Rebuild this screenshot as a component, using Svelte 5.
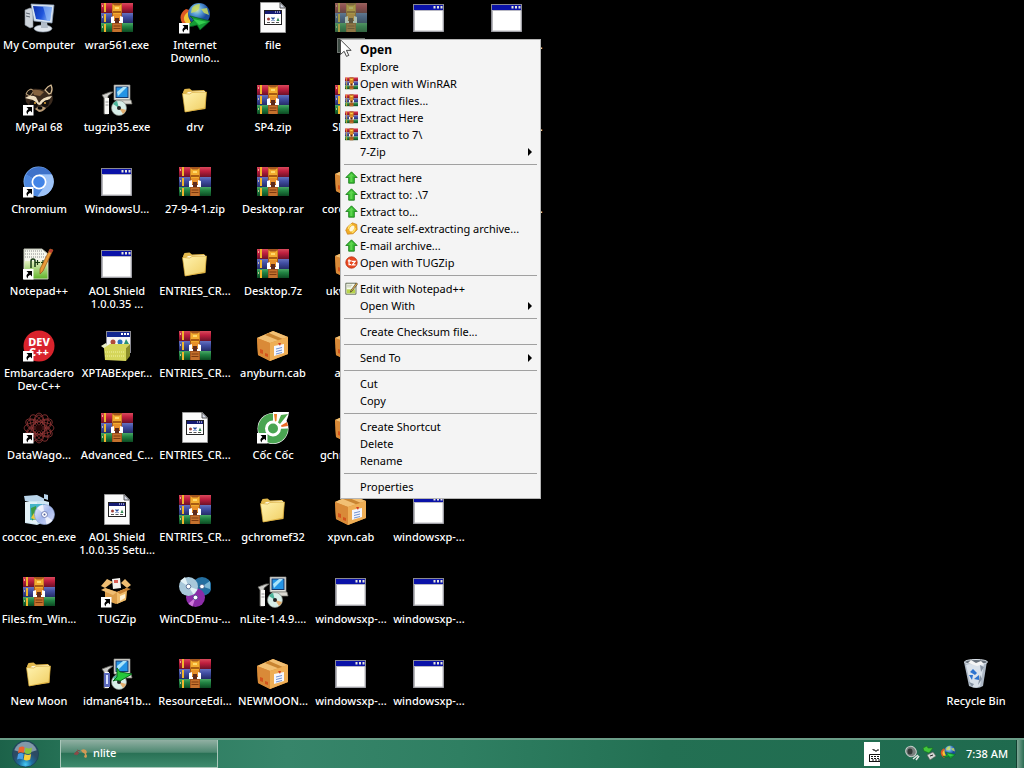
<script>
  const columns = [
    [
      { icon: 'computer', label: ['My Computer'] },
      { icon: 'raccoon', label: ['MyPal 68'], link: true },
      { icon: 'chromium', label: ['Chromium'], link: true },
      { icon: 'notepad', label: ['Notepad++'], link: true },
      { icon: 'devcpp', label: ['Embarcadero', 'Dev-C++'], link: true },
      { icon: 'wagon', label: ['DataWago...'], link: true },
      { icon: 'setupbox', label: ['coccoc_en.exe'] },
      { icon: 'rar', label: ['Files.fm_Win...'] },
      { icon: 'folder', label: ['New Moon'] }
    ],
    [
      { icon: 'rar', label: ['wrar561.exe'] },
      { icon: 'installer', label: ['tugzip35.exe'] },
      { icon: 'window', label: ['WindowsU...'] },
      { icon: 'window', label: ['AOL Shield', '1.0.0.35 ...'] },
      { icon: 'package', label: ['XPTABExper...'] },
      { icon: 'rar', label: ['Advanced_C...'] },
      { icon: 'page', label: ['AOL Shield', '1.0.0.35 Setu...'] },
      { icon: 'openbox', label: ['TUGZip'], link: true },
      { icon: 'idman', label: ['idman641b...'] }
    ],
    [
      { icon: 'globe', label: ['Internet', 'Downlo...'], link: true },
      { icon: 'folder', label: ['drv'] },
      { icon: 'rar', label: ['27-9-4-1.zip'] },
      { icon: 'folder', label: ['ENTRIES_CR...'] },
      { icon: 'rar', label: ['ENTRIES_CR...'] },
      { icon: 'page', label: ['ENTRIES_CR...'] },
      { icon: 'rar', label: ['ENTRIES_CR...'] },
      { icon: 'discs', label: ['WinCDEmu-...'] },
      { icon: 'rar', label: ['ResourceEdi...'] }
    ],
    [
      { icon: 'page', label: ['file'] },
      { icon: 'rar', label: ['SP4.zip'] },
      { icon: 'rar', label: ['Desktop.rar'] },
      { icon: 'rar', label: ['Desktop.7z'] },
      { icon: 'box', label: ['anyburn.cab'] },
      { icon: 'coccoc', label: ['Cốc Cốc'], link: true },
      { icon: 'folder', label: ['gchromef32'] },
      { icon: 'installer', label: ['nLite-1.4.9....'] },
      { icon: 'box', label: ['NEWMOON...'] }
    ],
    [
      { icon: 'rar', label: [], selected: true },
      { icon: 'rar', label: ['SP4.rar'] },
      { icon: 'box', label: ['corona.cab'] },
      { icon: 'box', label: ['ukwn.cab'] },
      { icon: 'box', label: ['as.cab'] },
      { icon: 'box', label: ['gchrom.cab'] },
      { icon: 'box', label: ['xpvn.cab'] },
      { icon: 'window', label: ['windowsxp-...'] },
      { icon: 'window', label: ['windowsxp-...'] }
    ],
    Array.from({ length: 9 }, (_, row) => ({ icon: 'window', label: row < 6 ? [] : ['windowsxp-...'] })),
    Array.from({ length: 3 }, () => ({ icon: 'window', label: ['windowsxp-...'] }))
  ];

  const menu = [
    [
      { text: 'Open', bold: true },
      { text: 'Explore' },
      { text: 'Open with WinRAR', icon: 'rar' },
      { text: 'Extract files...', icon: 'rar' },
      { text: 'Extract Here', icon: 'rar' },
      { text: 'Extract to 7\\', icon: 'rar' },
      { text: '7-Zip', sub: true }
    ],
    [
      { text: 'Extract here', icon: 'up' },
      { text: 'Extract to: .\\7', icon: 'up' },
      { text: 'Extract to...', icon: 'up' },
      { text: 'Create self-extracting archive...', icon: 'sfx' },
      { text: 'E-mail archive...', icon: 'up' },
      { text: 'Open with TUGZip', icon: 'tz' }
    ],
    [{ text: 'Edit with Notepad++', icon: 'edit' }, { text: 'Open With', sub: true }],
    [{ text: 'Create Checksum file...' }],
    [{ text: 'Send To', sub: true }],
    [{ text: 'Cut' }, { text: 'Copy' }],
    [{ text: 'Create Shortcut' }, { text: 'Delete' }, { text: 'Rename' }],
    [{ text: 'Properties' }]
  ];
</script>

{#snippet art(name)}
  {#if name === 'rar'}
    <rect x="0" y="1" width="32" height="10" fill="url(#g-red)" />
    <rect x="0" y="11" width="32" height="10" fill="url(#g-blue)" />
    <rect x="0" y="21" width="32" height="9" fill="url(#g-green)" />
    <path d="M4 1v9M4 12v8M4 22v8" stroke="#f0b62c" stroke-width="2" />
    <path d="M1 4h1M1 15h1M1 25h1" stroke="#f5d9a0" stroke-width="1.5" />
    <rect x="11" y="1" width="10" height="29" fill="#a5561f" />
    <path d="M12 22h8v8h-8z" fill="#c4712d" />
    <path d="M12.500 24h7M12.500 26.500h7" stroke="#7c3a10" />
    <path d="M11.500 2l2 1.500h5L20.500 2v7l-1 5h-7l-1-5z" fill="#f3ac2e" />
    <path d="M12 9h8v2h-8z" fill="#a85c12" />
    <path d="M14 5h4v2h-4z" fill="#ffd96a" />
    <path d="M10 15l3-1v5h6v-5l3 1v6H10z" fill="#fff" />
    <path d="M13 12h6v6h-6z" fill="#e8902a" />
    <path d="M14 16h4v5h-4z" fill="#5d2a1c" />
  {:else if name === 'window'}
    <rect x="0.500" y="2.500" width="30" height="27" fill="#fff" stroke="#8b8b93" />
    <rect x="1" y="3" width="29" height="5" fill="#0a12a8" />
    <path d="M1 8.500h29" stroke="#b8b8c4" />
    <path d="M1.500 9v20h28.500V9" fill="none" stroke="#b6b6ba" />
    <path d="M20.500 4h2v2.500h-2zM24 4h2v2.500h-2zM27.500 4h2v2.500h-2z" fill="#e8e8dc" />
  {:else if name === 'folder'}
    <path d="M4 8l1.500-3 5-.5 2.500 2 12-.5 1.500 2v17l-20 3z" fill="#e3b94c" />
    <path d="M9 8l17-1v3H7z" fill="#fff7d8" />
    <path d="M3.500 9.500l7 .5 2.500-1.500 14.500-.5-1.500 16L6 28z" fill="url(#g-folder)" stroke="#d9aa3a" stroke-width=".7" />
  {:else if name === 'page'}
    <path d="M3.500.5h20l5 5v25h-25z" fill="#fafafa" stroke="#9a9a9a" />
    <path d="M23 .5v5.500h5.500z" fill="#d7dbe8" stroke="#333" stroke-width=".8" />
    <rect x="7.500" y="8.500" width="17" height="14" fill="#fff" stroke="#222" />
    <rect x="8" y="9" width="16" height="3" fill="#151b72" />
    <path d="M18 10h1M20 10h1M22 10h1" stroke="#fff" />
    <circle cx="11.500" cy="17" r="1.500" fill="#a0403a" />
    <path d="M14.500 15.500l3 3m0-3l-3 3" stroke="#264c9e" stroke-width="1.300" />
    <path d="M19.500 19l1.500-3.500L22.500 19z" fill="#2f8750" />
    <path d="M10 20.500h3M14.500 20.500h3M19 20.500h3" stroke="#555" />
  {:else if name === 'box'}
    <path d="M0 8L16 1l15 6v17l-18 7L1 25z" fill="#d98f35" />
    <path d="M0 8L16 1l15 6-18 6z" fill="#f2c074" />
    <path d="M8 5l15 6v4l3-1V9L12 3z" fill="#c98532" />
    <path d="M13 13L31 7v17l-18 7z" fill="#eeae55" />
    <path d="M0 8l13 5v18L1 25z" fill="#d98a38" />
    <path d="M17 16l10-2v9l-10 3z" fill="#f4f7ff" />
    <path d="M19 19l6-1.500M19 21.500l6-1.500M19 24l6-1.500" stroke="#7292d0" stroke-width="1" />
    <path d="M21 13l2 3 1-3z" fill="#d33b22" />
    <path d="M3 19l3 1v4l-3-1zM8 23l3 1v3l-3-1z" fill="#d4541d" />
  {:else if name === 'computer'}
    <path d="M2 8l5-2 3 1v18l-3 1-5-3z" fill="#cdd3da" stroke="#8a929c" stroke-width=".6" />
    <path d="M3 11l4 1M3 14l4 1" stroke="#5b6470" />
    <ellipse cx="20" cy="26.500" rx="9" ry="3.500" fill="#dfe5ec" stroke="#8b98a8" stroke-width=".6" />
    <path d="M18 20h6l1 6h-7z" fill="#b2bcc8" />
    <path d="M8 2l23 1-2 18-18-2z" fill="#d9e4f0" stroke="#8ea0b8" stroke-width=".7" />
    <path d="M10 4l19 1-2 14-14-2z" fill="url(#g-screen)" />
    <path d="M20 4.500l9 .5-2 14-3-.5z" fill="#8db6f5" opacity=".7" />
  {:else if name === 'raccoon'}
    <path d="M2 12q1-6 6-7 7-1 13 1 3-4 7-5 3 3 1 9 2 6-1 10-5 6-12 6-8-1-13-8z" fill="#3a2a1e" />
    <path d="M22 6q3-4 6-5 2 4 0 8l-2 1z" fill="#1a1310" stroke="#d6bd95" stroke-width="1.200" />
    <path d="M3 10q1-4 5-5l3 2-4 5z" fill="#17110d" stroke="#c7ac82" />
    <path d="M9 6q7-1 12 2l-4 4-6-1z" fill="#84623f" />
    <path d="M2 14q6-4 11-1l3 6q3-6 13-7-2 4-7 5l-5 4-4-1-3-4q-4-1-8-2z" fill="#efdfc2" />
    <path d="M7 17q5-2 8 4l-3 4-6-3zM19 19q4-4 8-3l-2 6-6 2z" fill="#15100e" />
    <path d="M12 25q5-5 11-1-3 4-7 4z" fill="#b99b76" />
    <circle cx="12" cy="19" r="1" fill="#e2a33b" /><circle cx="22" cy="19" r="1" fill="#e2a33b" />
    <ellipse cx="17" cy="24" rx="2.500" ry="1.700" fill="#050505" />
  {:else if name === 'chromium'}
    <circle cx="15.500" cy="15.500" r="15" fill="#7db0f3" />
    <path d="M16 16L3 8.500A15 15 0 0 1 29 8.500H16z" fill="#3f72c9" />
    <path d="M3 8.500A15 15 0 0 0 14.500 30.500L22 19.500 16 16z" fill="#4d88e0" />
    <path d="M29 8.500H16l6.500 11L14.500 30.500A15 15 0 0 0 29 8.500z" fill="#9dc3f8" />
    <circle cx="16" cy="16" r="7.500" fill="#fff" />
    <circle cx="16" cy="16" r="5.800" fill="#4284e6" />
  {:else if name === 'notepad'}
    <path d="M1 1h18l6 5v25H1z" fill="#f5f7ee" stroke="#b8bcae" />
    <path d="M1.500 13h23v17.500h-23z" fill="url(#g-np)" />
    <path d="M2 3h17M2 6h19M2 9h22" stroke="#8a8a8a" stroke-dasharray="1 1" />
    <path d="M8 20v-7q0-2 2-2t2 2v6" fill="none" stroke="#173a12" stroke-width="1.500" />
    <path d="M12 14.500h5M14.500 12v5M18 14.500h4M20 12v5" stroke="#173a12" stroke-width="1.200" />
    <path d="M27 1l3 1-10 21-3 3 0-5z" fill="#e79a38" stroke="#955415" stroke-width=".7" />
    <path d="M27 1l3 1-1.500 3-3-1z" fill="#b93e32" />
  {:else if name === 'devcpp'}
    <circle cx="16" cy="16" r="15.500" fill="#d9232c" />
    <text x="16" y="15.500" class="dev">DEV</text>
    <text x="16" y="26" class="dev">C++</text>
  {:else if name === 'wagon'}
    <g fill="none" stroke="#8e3434" stroke-width=".8">
      {#each [0, 30, 60, 90, 120, 150] as angle}
        <ellipse cx="16" cy="16" rx="15" ry="6" transform="rotate({angle} 16 16)" />
        <ellipse cx="16" cy="9" rx="4" ry="6" transform="rotate({angle * 2} 16 16)" />
      {/each}
    </g>
    <circle cx="16" cy="16" r="3" fill="#240505" />
  {:else if name === 'setupbox'}
    <path d="M2 8l13-3 11 3v18l-12 5-12-2z" fill="#cfe6f2" />
    <path d="M1 2l13-1 8 4 3 1V1l-4-1v7H2z" fill="#b9d4ea" />
    <path d="M2 8h12v22L2 28z" fill="#e4f2f8" />
    <path d="M7 10h15v16H7z" fill="#46b5c9" />
    <path d="M8 14l5-2 1 8-5 7z" fill="#3f9b43" /><path d="M8 24l3-5 2 7z" fill="#ecc93e" />
    <circle cx="21.500" cy="20.500" r="10" fill="url(#g-disc)" stroke="#8ba2d4" stroke-width=".7" />
    <path d="M21.500 20.500L14 14a10 10 0 0 1 6-3.500zM21.500 20.500l8 6a10 10 0 0 1-6 4z" fill="#fff" opacity=".7" />
    <circle cx="21.500" cy="20.500" r="3" fill="#fff" stroke="#7280b8" /><circle cx="21.500" cy="20.500" r="1" fill="#4e5c99" />
  {:else if name === 'installer' || name === 'idman'}
    <path d="M13 1h16v15H13z" fill="#e3e3dc" stroke="#8b8b86" stroke-width=".7" />
    <rect x="15" y="3" width="12" height="10.500" fill="#2494e5" stroke="#14376b" />
    <path d="M16 8l6-5h4l-9 9z" fill="#a9e4fa" />
    <path d="M15 16h15l1 4H16z" fill="#dad9d2" stroke="#77756f" stroke-width=".7" />
    <path d="M1 11l8-3h3l-5 4v18H3V14z" fill="#cfcfcb" stroke="#676762" stroke-width=".8" />
    <path d="M4 14h4v16H4z" fill="#f8f8f5" /><path d="M4.500 18h3M4.500 21h3" stroke="#999" />
    <circle cx="18" cy="24" r="7.500" fill="#d8eee8" stroke="#878b84" stroke-width=".7" />
    <path d="M18 24l-6-4a7 7 0 0 1 4-3z" fill="#4cb59b" /><path d="M18 24l4 6a7 7 0 0 0 3-4z" fill="#e1ad6e" />
    <circle cx="18" cy="24" r="2" fill="#222" />
    {#if name === 'idman'}
      <path d="M3 15h6v14H3z" fill="#5b69bc" /><path d="M5 17h2v9H5z" fill="#d9e3ff" />
      <path d="M16 10l3 4 12 2-12 7-4-1-3 1 4-4z" fill="#26c73b" stroke="#0b691c" />
    {/if}
  {:else if name === 'package'}
    <rect x="5.500" y="1.500" width="24" height="21" fill="#f5f5f5" stroke="#8b8b93" />
    <path d="M6 2h23v5H6z" fill="#11268f" /><path d="M20 4h2M23 4h2M26 4h2" stroke="#fff" stroke-width="2" />
    <circle cx="12" cy="12" r="2.500" fill="#b04b39" /><circle cx="19" cy="12" r="2.500" fill="#2771bc" /><path d="M25 9l3 5h-5z" fill="#2b9273" />
    <path d="M0 16l5-3 3 5-4 1z" fill="#e9efc7" />
    <path d="M3 18l6-4 20 0-4 4zM3 18h22v13L4 30z" fill="#d5d65a" />
    <path d="M25 18l4-4v12l-4 5z" fill="#8d8e29" />
    <path d="M4 22h20M4 26h20" stroke="#f2f3a2" stroke-dasharray="1 1" />
  {:else if name === 'openbox'}
    <path d="M4 12l12 4 10-4-1 12-10 4-11-4z" fill="#dc9e4a" />
    <path d="M16 16l10-4-1 12-9 4z" fill="#f0bd6c" />
    <path d="M4 12L0 10l6-7 6 3zM26 12l4-3-6-6-4 4zM4 12l-4 2 12 5 4-3z" fill="#efbd72" />
    <path d="M26 12l4 1-11 5-3-2z" fill="#c98335" />
    <path d="M11 3l8-1 1 10-8 1z" fill="#f4f2ef" /><path d="M13 4h4v3h-4z" fill="#db5e55" />
    <path d="M19 20l5-2v4l-5 3z" fill="#fff2d4" />
  {:else if name === 'globe'}
    <path d="M8 26C0 20-1 12 7 7l7 2c-8 5-8 9-2 13z" fill="#de5723" />
    <path d="M8 22C3 18 4 12 11 9l5 2c-6 4-7 8-1 12z" fill="#f2c638" />
    <circle cx="20" cy="12" r="11" fill="url(#g-globe)" />
    <path d="M13 6q3-4 8-4l-1 5-4 3-4 1zM22 7l6-1 2 7-5-2z" fill="#c9d95d" opacity=".85" />
    <path d="M11 14l20 5-10 9-3-5q-7 3-12 0 6-1 9-5z" fill="#159b34" stroke="#06591c" stroke-width=".7" />
    <path d="M14 17l14 3-8 3z" fill="#35cf4f" />
  {:else if name === 'discs'}
    <circle cx="23" cy="10.500" r="9.500" fill="#246fa0" /><path d="M23 10.500L31 5v8z" fill="#79b5d4" />
    <circle cx="16.500" cy="21.500" r="9.500" fill="#8c2ca8" /><path d="M16.500 21.500l-7 6 4 3z" fill="#cf79db" />
    <circle cx="9.500" cy="10.500" r="9.500" fill="#a8c8da" /><path d="M9.500 10.500L1 5l5-4zM9.500 10.500l9 3-4 5z" fill="#e3f2f7" />
    <g fill="#fff" stroke="#334c7c" stroke-width=".7"><circle cx="9.500" cy="10.500" r="2.300" /><circle cx="23" cy="10.500" r="2.300" /><circle cx="16.500" cy="21.500" r="2.300" /></g>
  {:else if name === 'coccoc'}
    <circle cx="16" cy="16.500" r="15.500" fill="#fff" />
    <path d="M16 1.500a15 15 0 1 0 15 15l-7 .3a8 8 0 1 1-8-8.300z" fill="#4aa552" />
    <path d="M16 16V0h16q-1 9-7 15z" fill="#fff" />
    <path d="M17 2l3 0-.5 7-1.500.5z" fill="#ec8128" /><path d="M24 3l7-1-8 10-2-1.500z" fill="#4fa94c" /><path d="M30 10l1 4-6.500 1-.5-1.500z" fill="#ea6b28" />
    <circle cx="16" cy="16.500" r="7" fill="#fff" /><circle cx="16" cy="16.500" r="5" fill="#4aa552" />
  {:else if name === 'bin'}
    <path d="M4 4l23-1-4 25q-6 4-14 0z" fill="#aeb9c6" />
    <path d="M6 7l8-2 10 1-4 22q-5 3-9 0z" fill="#dae2eb" />
    <ellipse cx="16" cy="4" rx="11.500" ry="2.500" fill="#68717b" stroke="#dbe3eb" />
    <path d="M8 5l3-3 5 3 5-2 3 3-7 2z" fill="#f5f5f5" />
    <path d="M10 14l3-3 4 4-2 2zM9 17l3 5 1-5zM14 21l5-4 0 5z" fill="#2d73cf" />
    <path d="M20 7l4 2-3 5zM20 17l2 4-4 6zM9 24l5 2-2 3z" fill="#8794a4" />
  {:else if name === 'up'}
    <path d="M16 2L30 16h-7v14H9V16H2z" fill="#39bd31" stroke="#177a17" stroke-width="2" />
    <path d="M16 6l6 7h-4v14h-5V14H8z" fill="#5ed44e" />
  {:else if name === 'sfx'}
    <path d="M6 12L18 2l11 4 1 13-10 10-14 1-4-10z" fill="#f0ae27" stroke="#c47514" stroke-width="1.500" />
    <ellipse cx="17" cy="16" rx="8" ry="5" transform="rotate(-55 17 16)" fill="#fff7dc" />
    <path d="M8 17q1-8 9-11M17 26q8-3 8-11" fill="none" stroke="#ffe36c" stroke-width="3" />
  {:else if name === 'tz'}
    <circle cx="16" cy="16" r="14" fill="#e8481f" stroke="#bd3012" stroke-width="2" />
    <path d="M10 8v13h5M7 12h9M17 13h8l-7 9h8" fill="none" stroke="#fff" stroke-width="3" />
  {:else if name === 'edit'}
    <path d="M2 3h25v27H2z" fill="#f7faec" stroke="#49543f" stroke-width="2" />
    <path d="M4 18h21v10H4z" fill="#b7d34b" /><path d="M5 8h13M5 12h10" stroke="#b4bda6" stroke-width="2" />
    <path d="M28 2l3 3-14 18-4 2 2-5z" fill="#e6b04b" stroke="#32332b" stroke-width="1.500" />
  {/if}
{/snippet}

{#snippet desktopIcon(item)}
  <button class="shortcut" class:selected={item.selected}>
    <svg class="icon" viewBox="0 0 32 32" aria-hidden="true">
      {@render art(item.icon)}
      {#if item.link}
        <path d="M0 21h10.500v10.500H0z" fill="#fff" />
        <path d="M3.500 23H9v5.500L7.200 26.700Q4.500 28 4.500 30.500 2 27 5.400 24.900z" fill="#000" />
      {/if}
      {#if item.selected}<path d="M0 1h32v29H0z" fill="#5a7d60" opacity=".5" />{/if}
    </svg>
    <span class="label">{#each item.label as line}<span>{line}</span>{/each}</span>
  </button>
{/snippet}

<svg class="defs" aria-hidden="true">
  <defs>
    <linearGradient id="g-red" x2="0" y2="1"><stop stop-color="#d94a5c" /><stop offset=".4" stop-color="#c01f3f" /><stop offset="1" stop-color="#6d1028" /></linearGradient>
    <linearGradient id="g-blue" x2="0" y2="1"><stop stop-color="#6572bf" /><stop offset=".4" stop-color="#414fa3" /><stop offset="1" stop-color="#252c68" /></linearGradient>
    <linearGradient id="g-green" x2="0" y2="1"><stop stop-color="#4aa865" /><stop offset=".4" stop-color="#218242" /><stop offset="1" stop-color="#0c4a22" /></linearGradient>
    <linearGradient id="g-folder" x2="1" y2="1"><stop stop-color="#fff3b0" /><stop offset="1" stop-color="#f0ce62" /></linearGradient>
    <linearGradient id="g-screen" x2="1" y2=".3"><stop stop-color="#0d2fa8" /><stop offset=".6" stop-color="#1f55dc" /><stop offset="1" stop-color="#7aa8f3" /></linearGradient>
    <linearGradient id="g-np" x2="0" y2="1"><stop stop-color="#e6f2c4" /><stop offset="1" stop-color="#62b52b" /></linearGradient>
    <linearGradient id="g-disc" x2="1" y2="1"><stop stop-color="#eef3ff" /><stop offset=".5" stop-color="#a5b8ec" /><stop offset="1" stop-color="#d8ddfa" /></linearGradient>
    <radialGradient id="g-globe" cx=".4" cy=".3"><stop stop-color="#d8eeb0" /><stop offset=".45" stop-color="#5fa3dc" /><stop offset="1" stop-color="#1a4c9c" /></radialGradient>
    <radialGradient id="g-orb" cx=".5" cy=".9"><stop stop-color="#45c9f5" /><stop offset=".5" stop-color="#1d6da0" /><stop offset="1" stop-color="#2c4a63" /></radialGradient>
  </defs>
</svg>

<div class="screen">
  <main class="desktop">
    <div class="columns">
      {#each columns as column}
        <div class="column">
          {#each column as item}{@render desktopIcon(item)}{/each}
        </div>
      {/each}
    </div>
    <div class="corner">{@render desktopIcon({ icon: 'bin', label: ['Recycle Bin'] })}</div>
  </main>

  <footer class="taskbar">
    <button class="start" aria-label="Start">
      <svg viewBox="0 0 30 30" aria-hidden="true">
        <circle cx="15" cy="15" r="14" fill="url(#g-orb)" stroke="#1b4658" />
        <path d="M3 11a12.500 12.500 0 0 1 24 0q-12 5-24 0z" fill="#d6e8ee" opacity=".5" />
        <path d="M8 8q4-2 6 0l-1 6q-3-2-6 0z" fill="#ec6230" /><path d="M15 8q4 2 7 0l-1 6q-3 2-7 0z" fill="#8ac43a" />
        <path d="M7 15q3-2 6 0l-1 6q-3-2-6 0z" fill="#49a0e7" /><path d="M14 15q4 2 7 0l-1 6q-4 2-7 0z" fill="#f9cf3b" />
      </svg>
    </button>
    <button class="task">
      <svg viewBox="0 0 16 16" aria-hidden="true">
        <path d="M1 9l3-3 2 2-2 2zM4 5l3 1" fill="#8c4a47" stroke="#76514c" />
        <path d="M8 5q5-2 6 2l-1 2q2 2 0 4l-2-1 1-3-3-2z" fill="#d19a55" />
      </svg>
      nlite
    </button>
    <div class="spacer"></div>
    <button class="keyboard" aria-label="Keyboard">
      <svg viewBox="0 0 16 24" aria-hidden="true">
        <path d="M9 7v1h2v1h2V8h2" fill="none" stroke="#111" />
        <path d="M5.500 12.500H16M5.500 12.500v7M5 19.500h11" fill="none" stroke="#111" />
        <path d="M7 14.500h9M7 16.500h9M8 18h8" stroke="#111" stroke-dasharray="2 1" />
      </svg>
    </button>
    <div class="tray">
      <svg viewBox="0 0 16 16" role="img" aria-label="Volume">
        <ellipse cx="7" cy="6.500" rx="5.500" ry="5" transform="rotate(35 7 6.500)" fill="#777f7d" stroke="#c7cecb" />
        <ellipse cx="6" cy="6.500" rx="2.500" ry="3" fill="#343b39" />
        <path d="M9 14l5-4M12 15l3-4" stroke="#e4e8e6" stroke-width="1.500" />
      </svg>
      <svg viewBox="0 0 16 16" role="img" aria-label="Safely remove hardware">
        <path d="M1 3l4-2 1 2h5l-4 5-5-2z" fill="#43c73b" stroke="#17721d" stroke-width=".6" />
        <path d="M5 10l6-3 3 4-6 4z" fill="#d4d8d5" stroke="#555" stroke-width=".6" /><path d="M8 11l3-1" stroke="#222" />
      </svg>
      <svg viewBox="0 0 32 32" role="img" aria-label="Internet downloads">{@render art('globe')}</svg>
    </div>
    <time class="clock">7:38 AM</time>
    <button class="peek" aria-label="Show desktop"></button>
  </footer>

  <div class="menu" role="menu">
    {#each menu as group, i}
      {#if i > 0}<hr />{/if}
      {#each group as entry}
        <button class="entry" class:bold={entry.bold} role="menuitem">
          <svg viewBox="0 0 32 32" aria-hidden="true">{#if entry.icon}{@render art(entry.icon)}{/if}</svg>
          <span>{entry.text}</span>
          {#if entry.sub}<svg class="arrow" viewBox="0 0 4 8" aria-hidden="true"><path d="M0 0l4 4-4 4z" /></svg>{/if}
        </button>
      {/each}
    {/each}
  </div>

  <svg class="cursor" viewBox="0 0 13 20" aria-hidden="true">
    <path d="M.5.5v16l4-3.500 2.500 5.500 2.500-1-2.500-5.500h5z" fill="#fff" stroke="#222" stroke-width=".9" />
  </svg>
</div>

<style>
  :global(body) {
    margin: 0;
    background: #000;
  }
  .screen {
    position: relative;
    display: flex;
    flex-direction: column;
    min-height: 100vh;
    overflow: hidden;
    background: #000;
    font-family: 'Noto Sans', 'Open Sans', sans-serif;
    font-size: 11px;
  }
  button {
    margin: 0;
    padding: 0;
    border: 0;
    background: none;
    font: inherit;
    color: inherit;
  }
  .defs {
    position: absolute;
    width: 0;
    height: 0;
  }
  .desktop {
    flex: 1;
    display: flex;
    justify-content: space-between;
    align-items: flex-end;
  }
  .columns {
    display: flex;
    align-self: flex-start;
  }
  .column {
    display: flex;
    flex-direction: column;
  }
  .corner {
    padding-right: 9px;
  }
  .shortcut {
    display: flex;
    flex-direction: column;
    align-items: center;
    gap: 4px;
    width: 78px;
    height: 82px;
    padding-top: 2px;
    color: #fff;
    font-weight: 500;
    line-height: 13px;
    white-space: nowrap;
  }
  .icon {
    width: 32px;
    height: 32px;
    flex: none;
  }
  .label {
    display: flex;
    flex-direction: column;
    align-items: center;
  }
  .selected .label {
    width: 26px;
    height: 13px;
    border: 1px solid #6d746f;
    background: #3c4a42;
  }
  .dev {
    fill: #fff;
    font-size: 11px;
    font-weight: 800;
    text-anchor: middle;
  }
  .taskbar {
    display: flex;
    align-items: stretch;
    height: 28px;
    border-top: 2px solid #6b9d88;
    background: linear-gradient(90deg, #1c6249, #2b7a5d 10%, #37856a 28%, #2f7f62 45%, #237053 65%, #1f6a4e);
    color: #fff;
    font-weight: 500;
  }
  .start {
    width: 60px;
    padding-left: 11px;
    text-align: left;
  }
  .start svg {
    display: block;
    width: 29px;
    height: 28px;
  }
  .task {
    display: flex;
    align-items: center;
    gap: 4px;
    width: 158px;
    padding: 0 0 2px 12px;
    border: 1px solid #a9c7ba;
    border-top: 0;
    background: linear-gradient(#91b0a3, #4f8972 45%, #2a7256 50%, #3e8a6d);
    box-sizing: border-box;
  }
  .task svg {
    width: 16px;
    height: 16px;
  }
  .spacer {
    flex: 1;
  }
  .keyboard {
    width: 16px;
    height: 24px;
    align-self: center;
    background: #fff;
  }
  .keyboard svg {
    display: block;
  }
  .tray {
    display: flex;
    align-items: center;
    gap: 2px;
    padding: 0 10px 2px 24px;
  }
  .tray svg {
    width: 16px;
    height: 16px;
  }
  .clock {
    align-self: center;
    padding: 0 8px 2px 0;
  }
  .peek {
    width: 8px;
    border-left: 1px solid #123f30;
    background: linear-gradient(90deg, #7fa896, #2b6b52);
  }
  .menu {
    position: absolute;
    left: 340px;
    top: 39px;
    box-sizing: border-box;
    width: 201px;
    padding: 1px 2px 3px;
    border: 1px solid #b5b5b5;
    background: #f4f4f4;
    color: #000;
  }
  .menu hr {
    height: 1px;
    margin: 4px 1px;
    border: 0;
    background: #a0a0a0;
  }
  .entry {
    display: flex;
    align-items: center;
    gap: 2px;
    width: 100%;
    height: 17px;
    padding: 0 6px 0 2px;
    line-height: 17px;
    text-align: left;
    white-space: nowrap;
  }
  .entry svg {
    width: 13px;
    height: 13px;
    flex: none;
  }
  .entry span {
    flex: 1;
  }
  .entry .arrow {
    width: 4px;
    height: 8px;
  }
  .bold {
    font-size: 12px;
    font-weight: 700;
  }
  .cursor {
    position: absolute;
    left: 340px;
    top: 39px;
    width: 12px;
    height: 19px;
  }
</style>
